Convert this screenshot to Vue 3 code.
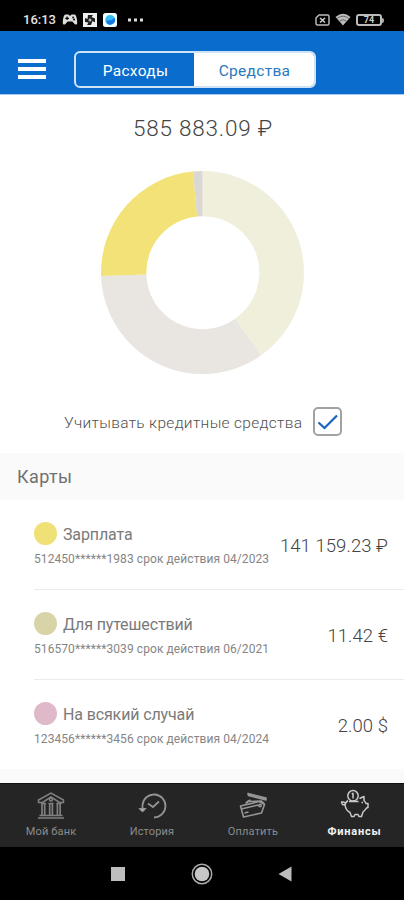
<script setup>
const slices = [
  { color: '#f0efdc', d: 'M101 0A101 101 0 0 1 159.4 183.4L133.5 147A56 56 0 0 0 101 45Z' },
  { color: '#e9e5e1', d: 'M159.4 183.4A101 101 0 0 1 0.1 104.5L45.1 103A56 56 0 0 0 133.5 147Z' },
  { color: '#f2e277', d: 'M0.1 104.5A101 101 0 0 1 91.5 0.5L95.8 45.3A56 56 0 0 0 45.1 103Z' },
  { color: '#dbd8d4', d: 'M91.5 0.5A101 101 0 0 1 101 0V45A56 56 0 0 0 95.8 45.3Z' },
]
const cards = [
  { name: 'Зарплата', info: '512450******1983 срок действия 04/2023', sum: '141 159.23 ₽', color: '#f0e176', cls: 'first' },
  { name: 'Для путешествий', info: '516570******3039 срок действия 06/2021', sum: '11.42 €', color: '#d9d3a8', cls: 'second' },
  { name: 'На всякий случай', info: '123456******3456 срок действия 04/2024', sum: '2.00 $', color: '#dfb9ca', cls: 'third' },
]
</script>

<template>
  <div class="phone">
    <div class="status">
      <span class="time">16:13</span>
      <svg class="pad" width="16" height="14" viewBox="0 0 16 14"><path fill="#ddd" fill-rule="evenodd" d="M3.5 1.5h3l.7 1h1.6l.7-1h3c1.700 0 2.700 4.500 2.700 8.500 0 1.700-1.600 2-2.600 1L10.300 8.500H5.700L3.400 11c-1 1-2.600.7-2.600-1 0-4 1-8.500 2.700-8.500ZM4.500 3.500v1.200H3.300v1.200h1.200v1.200h1.200V5.900h1.200V4.700H5.700V3.500ZM11 3.500a.9.900 0 1 0 .1 0ZM12 5.600a.9.900 0 1 0 .1 0Z"/></svg>
      <svg class="app" width="14" height="14" viewBox="0 0 14 14"><path fill="#eee" d="M0 0h14v14H0Z"/><path d="M5 2h5L8.500 4 12 5.500v4L9.500 8 8 12H4l1.500-2.500L2 9V5l2.500 1Z" fill="#1c1c1c"/><circle cx="7" cy="7" r="1.500" fill="#bbb"/></svg>
      <svg class="blue" width="14" height="14" viewBox="0 0 14 14"><rect width="14" height="14" rx="2.500" fill="#f4ffff"/><circle cx="7.200" cy="7" r="5" fill="#35bdf6"/><path d="M3.500 7.500Q8 8 11.800 5A5 5 0 0 1 4 10.500Z" fill="#1976e8"/></svg>
      <svg class="dots" width="15" height="4" viewBox="0 0 15 4"><path fill="#ddd" d="M0 .5h3v3H0ZM6 .5h3v3H6ZM12 .5h3v3h-3Z"/></svg>
      <svg class="sim" width="15" height="12" viewBox="0 0 15 12"><path d="M4 1h8.500q1.500 0 1.500 1.500v7q0 1.500-1.500 1.500h-10Q1 11 1 9.500V4Z" fill="none" stroke="#b9b9b9" stroke-width="1.500"/><path d="m5 4 5 4.500M10 4 5 8.500" stroke="#d0d0d0" stroke-width="1.500"/></svg>
      <svg class="wifi" width="16" height="13" viewBox="0 0 16 13"><path d="M.5 4Q8-2.500 15.500 4L8 12.500Z" fill="#bbb"/><path d="M2.300 5.300Q8 1 13.700 5.300M4.700 8Q8 5.300 11.300 8" fill="none" stroke="#444" stroke-width=".7"/></svg>
      <div class="battery">74</div><i class="tip"></i>
    </div>

    <header class="header">
      <div class="burger"><i></i><i></i><i></i></div>
      <div class="tabs">
        <div class="tab">Расходы</div>
        <div class="tab on">Средства</div>
      </div>
    </header>

    <main class="main">
      <div class="total">585 883.09 ₽</div>
      <svg class="donut" width="203" height="203" viewBox="0 0 202 202">
        <path v-for="s in slices" :key="s.color" :d="s.d" :fill="s.color" />
      </svg>
      <div class="credit">
        <span class="credit-text">Учитывать кредитные средства</span>
        <div class="check">
          <svg width="22" height="18" viewBox="0 0 22 18"><path d="m1.500 9.500 6 5.500L20 2.500" fill="none" stroke="#1763bd" stroke-width="2.200"/></svg>
        </div>
      </div>
      <div class="section">Карты</div>
      <div class="list">
        <div v-for="c in cards" :key="c.name" class="card" :class="c.cls">
          <div class="left">
            <div class="title"><i class="dot" :style="{ background: c.color }"></i><span class="name">{{ c.name }}</span></div>
            <div class="info">{{ c.info }}</div>
          </div>
          <div class="sum">{{ c.sum }}</div>
        </div>
      </div>
      <div class="rest"></div>
    </main>

    <nav class="nav">
      <div class="item bank">
        <svg width="30" height="30" viewBox="0 0 30 30" fill="none" stroke="#808080" stroke-width="1.500"><path d="M2.500 9 15 2 27.500 9v2.500h-4L15 6l-8.500 5.500h-4ZM5 12.500h5M12.500 12.500h5M20.500 12.500h5M3.500 24.500h23M2 27h26"/><path d="M6 12v12M8.700 12v12M13.700 12v12M16.400 12v12M21.400 12v12M24.100 12v12" stroke-width="1.700"/><circle cx="15" cy="8.500" r="1.500"/></svg>
        <span>Мой банк</span>
      </div>
      <div class="item history">
        <svg width="30" height="30" viewBox="0 0 30 30" fill="none" stroke="#929292" stroke-width="1.800"><path d="M5.500 18.500V14A11.500 11.500 0 1 1 17 26.500M11 12.500l5 3.500 6-5.500"/><path d="M2 17.500h7l-3.500 3.500Z" fill="#aaa" stroke-width="1"/></svg>
        <span>История</span>
      </div>
      <div class="item pay">
        <svg width="30" height="30" viewBox="0 0 30 30" fill="none" stroke="#969696" stroke-width="1.600" stroke-linejoin="round"><path d="m2.500 15 19-4.500 5 3-3 8.500-18 4Z"/><path d="m3.300 18 17-4M6.500 22l4-1"/><circle cx="22" cy="14.500" r="1.200"/><path d="m8.500 11 4-2M7.500 12.500l3-2 13-.5 3 3"/><path d="m10 2.500 18 4.500v2L10.500 4.500Z" fill="#888"/></svg>
        <span>Оплатить</span>
      </div>
      <div class="item fin">
        <svg width="30" height="30" viewBox="0 0 30 30" fill="none" stroke="#c9c9c9" stroke-width="1.500" stroke-linejoin="round"><path d="M8 11.500Q5.500 13 5 16l-2.500-.5L1.500 13h2.300L5.500 14.500M5 16c.5 3.500 2 6 5 7.500l1.500 4H14l1-2h3l1 2h2.500l1.500-4.500q2.500-2 3.500-4l1.500-.5v-4h-2q-.5-1.500-2-3V7.500L19.500 9.500"/><circle cx="13" cy="6.800" r="5.200"/><path d="M11.800 5.200 13 4.300v5.200M9 12.500h9.500M21.500 13.500H23"/></svg>
        <span>Финансы</span>
      </div>
    </nav>

    <div class="sys">
      <i class="square"></i>
      <svg class="home" width="22" height="22" viewBox="0 0 22 22"><circle cx="11" cy="11" r="9.700" fill="none" stroke="#aaa" stroke-width="1.500"/><circle cx="11" cy="11" r="7.300" fill="#c6c6c6"/></svg>
      <svg class="back" width="14" height="16" viewBox="0 0 14 16"><path d="M13.500.5v15L.5 8Z" fill="#bbb"/></svg>
    </div>
  </div>
</template>

<style>
body { margin: 0; background: #fff; }
</style>

<style scoped>
.phone { width: 404px; height: 900px; display: flex; flex-direction: column; overflow: hidden; background: #fff; font-family: Roboto, "Noto Sans", sans-serif; color: #666; white-space: nowrap; }
.status { height: 31px; flex: none; box-sizing: border-box; padding: 8px 20px 0 23px; background: #000; display: flex; align-items: center; }
.time { width: 39px; font-size: 13px; font-weight: 500; line-height: 24px; color: #e4e4e4; }
.app { margin-left: 5px; }
.blue { margin-left: 6px; }
.dots { margin-left: 11px; }
.sim { margin-left: auto; margin-top: 1px; }
.wifi { margin: 0 5px 0 5px; }
.battery { box-sizing: border-box; width: 26px; height: 12px; margin-top: 1px; border: 2px solid #bbb; border-radius: 3px; font-size: 9px; font-weight: 700; line-height: 9px; text-align: center; color: #ccc; }
.tip { width: 2px; height: 5px; margin-top: 1px; background: #aaa; border-radius: 0 2px 2px 0; }

.header { height: 64px; flex: none; box-sizing: border-box; padding: 20px 0 0 18px; background: #0a6ccd; display: flex; border-bottom: 1px solid #a5caed; }
.burger { width: 28px; height: 20px; padding-top: 8px; display: flex; flex-direction: column; justify-content: space-between; }
.burger i { height: 4px; background: #fff; }
.tabs { box-sizing: border-box; width: 242px; height: 37px; margin-left: 28px; border: 2px solid #cfe3f7; border-radius: 6px; display: flex; overflow: hidden; }
.tab { flex: 0 0 118px; box-sizing: border-box; padding-left: 1px; line-height: 36px; text-align: center; font-size: 15.500px; letter-spacing: .3px; color: #fff; }
.tab.on { flex: 1; background: #fff; color: #2a78bd; }

.main { height: 688px; flex: none; display: flex; flex-direction: column; }
.total { height: 76px; line-height: 67px; padding-left: 2px; text-align: center; font-size: 22.500px; font-weight: 300; letter-spacing: .8px; color: #444; }
.donut { margin-left: 101px; flex: none; }
.credit { height: 79px; box-sizing: border-box; padding: 33px 0 0 64px; display: flex; align-items: flex-start; }
.credit-text { width: 249px; line-height: 32px; font-size: 15.500px; font-weight: 300; letter-spacing: .32px; color: #505050; }
.check { box-sizing: border-box; width: 29px; height: 29px; border: 2px solid #a2a2a2; border-radius: 5px; display: flex; align-items: center; justify-content: center; }
.section { height: 47px; flex: none; box-sizing: border-box; padding-left: 17px; line-height: 48px; background: #fafafa; font-size: 18px; letter-spacing: .4px; color: #707070; }
.list { display: flex; flex-direction: column; padding-left: 34px; }
.card { height: 90px; box-sizing: border-box; padding: 21px 16px 0 0; display: flex; justify-content: space-between; border-bottom: 1px solid #ebebeb; }
.card.third { height: 89px; border-bottom: 0; }
.left { width: 240px; }
.title { height: 25px; display: flex; align-items: center; }
.dot { width: 23px; height: 23px; border-radius: 50%; margin-right: 6px; }
.name { font-size: 16px; letter-spacing: -.13px; line-height: 25px; padding-top: 1px; color: #7a7a7a; }
.info { margin-top: 4px; font-size: 12px; line-height: 19px; color: #858585; letter-spacing: .08px; }
.sum { line-height: 50px; font-size: 18.500px; font-weight: 300; letter-spacing: .05px; color: #444; }
.rest { flex: 1; background: #fafafa; }

.nav { height: 64px; flex: none; box-sizing: border-box; border-top: 1px solid #111; background: #252525; display: grid; grid-template-columns: repeat(4, 101px); }
.item { display: flex; flex-direction: column; align-items: center; padding-top: 7px; padding-left: 1px; font-size: 11px; letter-spacing: .15px; line-height: 15px; color: #8c8c8c; }
.item span { margin-top: 3px; }
.fin { color: #f2f2f2; font-weight: 700; padding-left: 2px; letter-spacing: .8px; }
.fin svg { margin-top: -2px; margin-bottom: 2px; }

.sys { height: 53px; flex: none; background: #000; display: flex; align-items: center; padding-left: 111px; }
.square { width: 14px; height: 14px; background: #bebebe; }
.home { margin-left: 66px; }
.back { margin-left: 65px; }
</style>
